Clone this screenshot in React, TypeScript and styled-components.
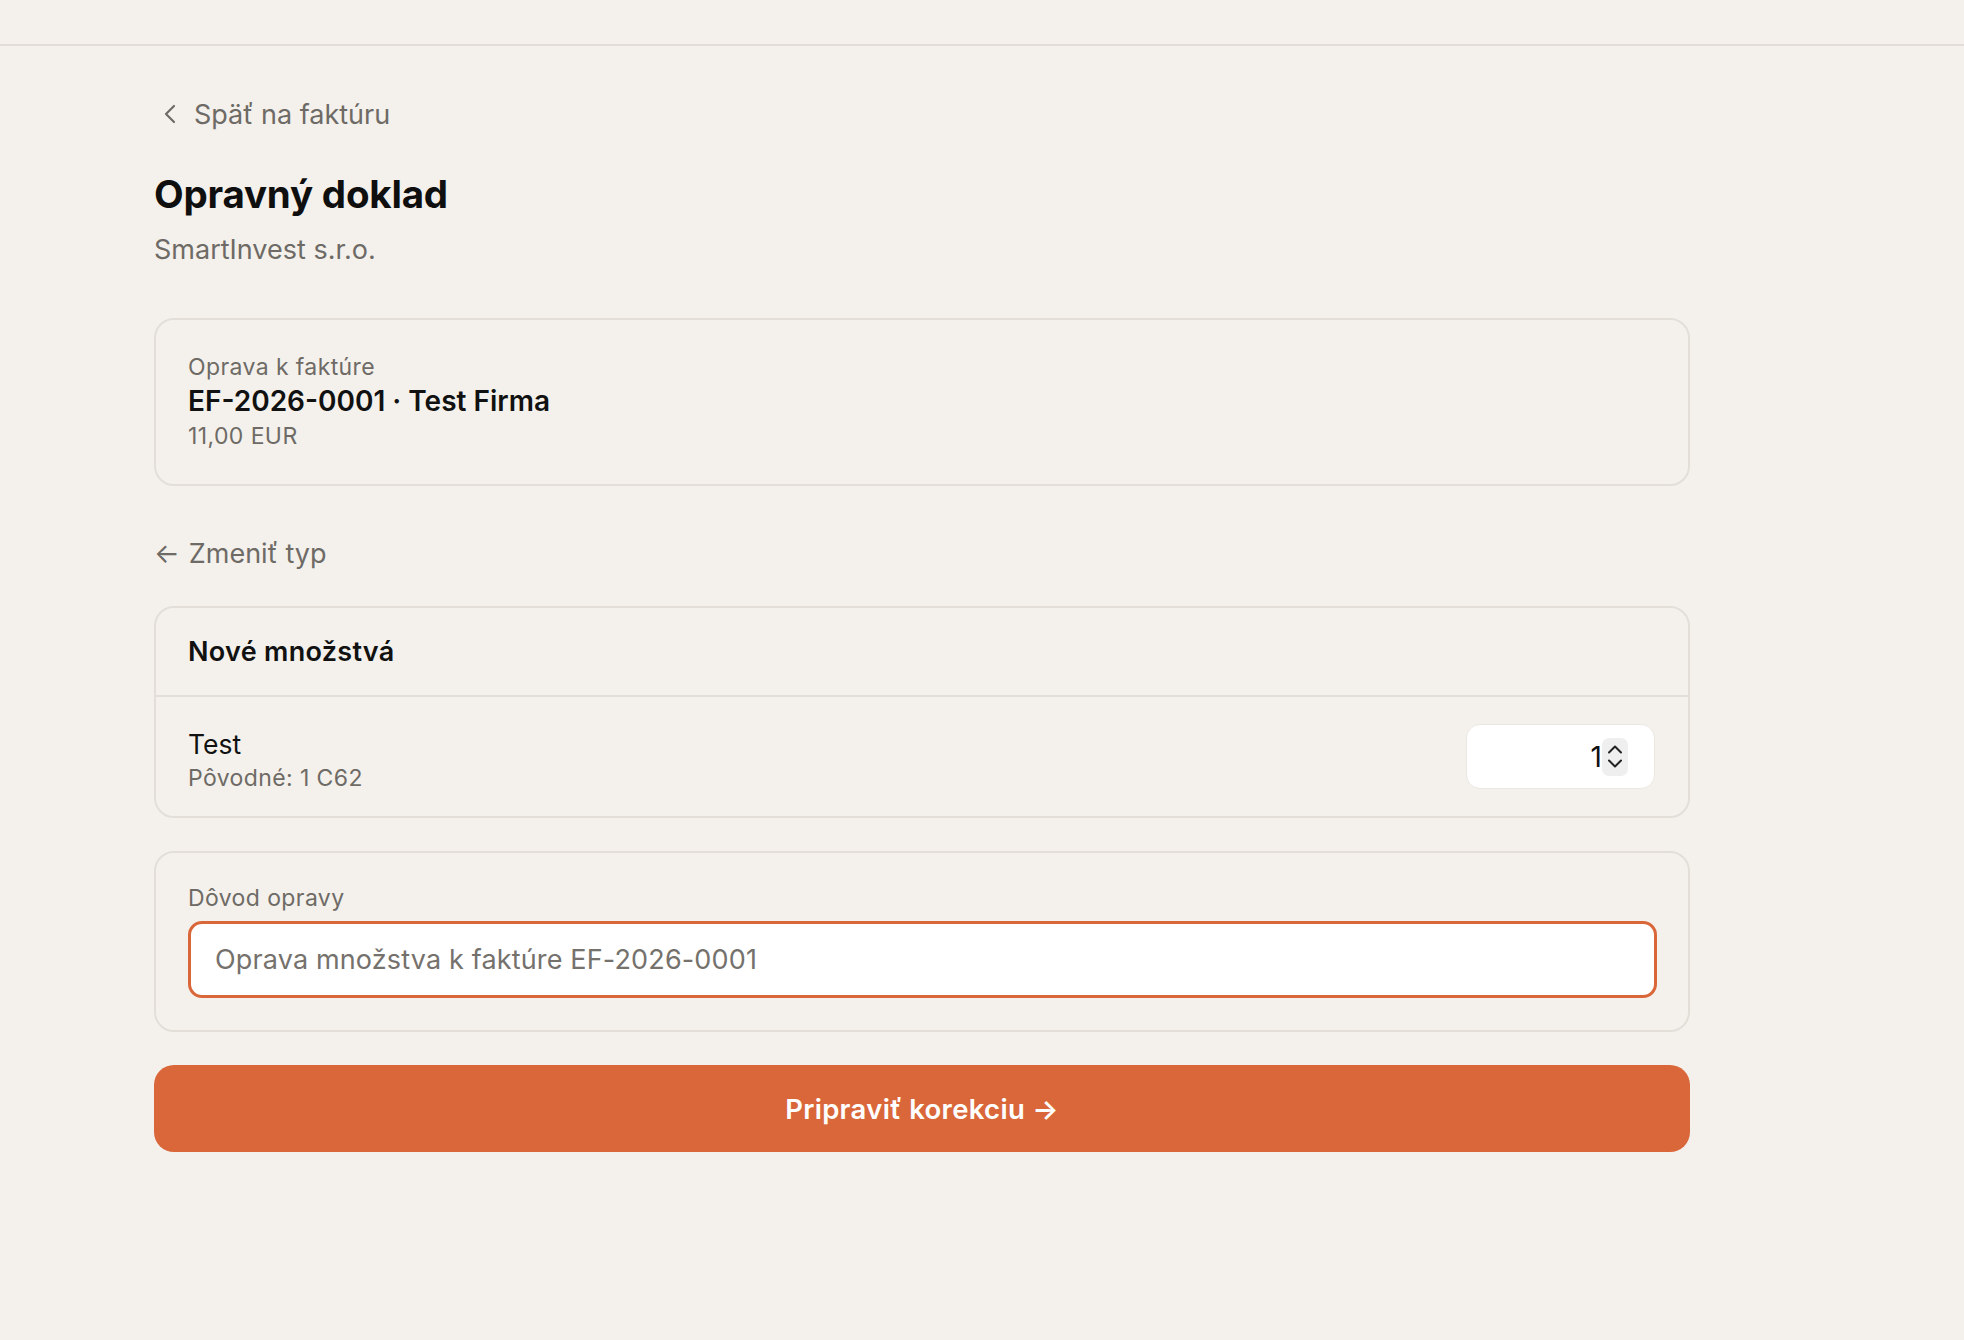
import { useState } from 'react';
import styled, { createGlobalStyle } from 'styled-components';
import { ChevronLeft } from 'lucide-react';

const GlobalStyle = createGlobalStyle`
  html, body {
    margin: 0;
    padding: 0;
    background: #f4f1ec;
    font-family: Inter, 'Noto Sans', 'Liberation Sans', sans-serif;
    color: #111111;
  }
  * {
    box-sizing: border-box;
  }
`;

const Page = styled.div`
  min-height: 1340px;
  background: #f4f1ec;
`;

const TopBar = styled.header`
  height: 46px;
  border-bottom: 2px solid #e2ded7;
`;

const Main = styled.main`
  width: 1536px;
  margin-left: 154px;
  padding-top: 50px;
  display: flex;
  flex-direction: column;
`;

const BackLink = styled.a`
  display: flex;
  align-items: center;
  gap: 8px;
  height: 36px;
  font-size: 27px;
  color: #6e6a65;
  text-decoration: none;
  cursor: pointer;
`;

const Title = styled.h1`
  margin: 39px 0 0;
  font-size: 38.5px;
  line-height: 46px;
  font-weight: 700;
  letter-spacing: -0.2px;
  color: #0f0f0f;
`;

const Subtitle = styled.p`
  margin: 15px 0 0;
  font-size: 27px;
  line-height: 36px;
  color: #6e6a65;
`;

const Card = styled.section<{ $mt: number }>`
  margin-top: ${(p) => p.$mt}px;
  border: 2px solid #e3dfd8;
  border-radius: 20px;
  overflow: hidden;
`;

const InvoiceBody = styled.div`
  padding: 31px 32px 31px;
  display: flex;
  flex-direction: column;
`;

const SmallLabel = styled.div`
  font-size: 23px;
  line-height: 32px;
  letter-spacing: 0.4px;
  color: #6e6a65;
`;

const InvoiceTitle = styled.div`
  font-size: 28px;
  line-height: 36px;
  font-weight: 600;
  color: #111111;
`;

const Amount = styled.div`
  font-size: 23px;
  line-height: 34px;
  letter-spacing: 0.4px;
  color: #6e6a65;
`;

const TypeLink = styled.a`
  margin-top: 49px;
  display: flex;
  align-items: center;
  gap: 9px;
  height: 36px;
  font-size: 27px;
  color: #6e6a65;
  cursor: pointer;
`;

const CardHeader = styled.div`
  height: 89px;
  padding: 0 32px;
  display: flex;
  align-items: center;
  border-bottom: 2px solid #e3dfd8;
  font-size: 27px;
  font-weight: 600;
  letter-spacing: 0.3px;
  color: #111111;
`;

const ItemRow = styled.div`
  height: 119px;
  padding: 0 33px 0 32px;
  display: flex;
  align-items: center;
  justify-content: space-between;
`;

const ItemInfo = styled.div`
  display: flex;
  flex-direction: column;
  padding-top: 6px;
`;

const ItemName = styled.div`
  font-size: 26.5px;
  line-height: 36px;
  color: #111111;
`;

const QtyBox = styled.div`
  width: 189px;
  height: 65px;
  background: #ffffff;
  border: 1px solid #ebe7e1;
  border-radius: 14px;
  display: flex;
  align-items: center;
  justify-content: flex-end;
  padding-right: 26px;
`;

const QtyInput = styled.input`
  width: 100%;
  border: none;
  outline: none;
  background: transparent;
  text-align: right;
  font-family: inherit;
  font-size: 28px;
  color: #111111;
  padding: 0;
`;

const Stepper = styled.div`
  width: 26px;
  height: 38px;
  flex-shrink: 0;
  background: #efefef;
  border-radius: 7px;
  display: flex;
  flex-direction: column;
  align-items: center;
  justify-content: center;
  gap: 5px;
`;

const ReasonBody = styled.div`
  padding: 29px 31px 32px 32px;
  display: flex;
  flex-direction: column;
  gap: 7px;
`;

const ReasonInput = styled.input`
  height: 77px;
  width: 100%;
  border: 3px solid #d9673a;
  border-radius: 14px;
  background: #ffffff;
  outline: none;
  padding: 0 24px;
  font-family: inherit;
  font-size: 27px;
  letter-spacing: 0.15px;
  color: #111111;
  caret-color: #111111;

  &::placeholder {
    color: #75716c;
  }
`;

const SubmitButton = styled.button`
  margin-top: 33px;
  height: 87px;
  width: 100%;
  border: none;
  border-radius: 20px;
  background: #d9673a;
  color: #ffffff;
  font-family: inherit;
  font-size: 27.5px;
  font-weight: 600;
  letter-spacing: 0.3px;
  cursor: pointer;
`;

export default function App() {
  const [qty, setQty] = useState('1');

  return (
    <Page>
      <GlobalStyle />
      <TopBar />
      <Main>
        <BackLink>
          <ChevronLeft size={32} strokeWidth={1.6} color="#6e6a65" />
          Späť na faktúru
        </BackLink>
        <Title>Opravný doklad</Title>
        <Subtitle>SmartInvest s.r.o.</Subtitle>

        <Card $mt={50}>
          <InvoiceBody>
            <SmallLabel>Oprava k faktúre</SmallLabel>
            <InvoiceTitle>EF-2026-0001 · Test Firma</InvoiceTitle>
            <Amount>11,00 EUR</Amount>
          </InvoiceBody>
        </Card>

        <TypeLink>
          <span>←</span>
          Zmeniť typ
        </TypeLink>

        <Card $mt={35}>
          <CardHeader>Nové množstvá</CardHeader>
          <ItemRow>
            <ItemInfo>
              <ItemName>Test</ItemName>
              <SmallLabel>Pôvodné: 1 C62</SmallLabel>
            </ItemInfo>
            <QtyBox>
              <QtyInput value={qty} onChange={(e) => setQty(e.target.value)} />
              <Stepper>
                <svg width="16" height="10" viewBox="0 0 16 10" fill="none">
                  <path d="M2 8.5 8 2.5l6 6" stroke="#222" strokeWidth="2" strokeLinecap="round" strokeLinejoin="round" />
                </svg>
                <svg width="16" height="10" viewBox="0 0 16 10" fill="none">
                  <path d="M2 1.5 8 7.5l6-6" stroke="#222" strokeWidth="2" strokeLinecap="round" strokeLinejoin="round" />
                </svg>
              </Stepper>
            </QtyBox>
          </ItemRow>
        </Card>

        <Card $mt={33}>
          <ReasonBody>
            <SmallLabel>Dôvod opravy</SmallLabel>
            <ReasonInput autoFocus placeholder="Oprava množstva k faktúre EF-2026-0001" />
          </ReasonBody>
        </Card>

        <SubmitButton type="button">Pripraviť korekciu →</SubmitButton>
      </Main>
    </Page>
  );
}
